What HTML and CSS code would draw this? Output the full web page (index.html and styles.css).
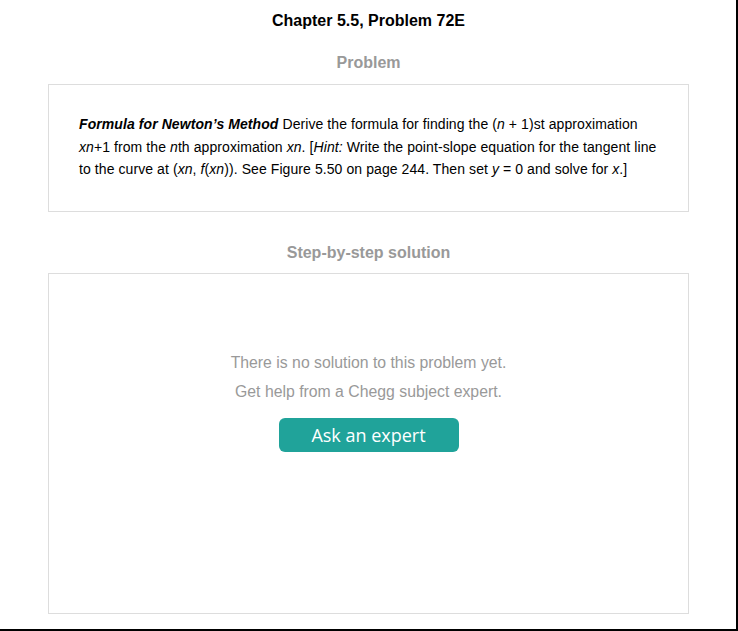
FILE: index.html
```html
<!DOCTYPE html>
<html>
<head>
<meta charset="utf-8">
<link rel="stylesheet" href="styles.css">
</head>
<body>
<div class="page">
  <h1 class="title">Chapter 5.5, Problem 72E</h1>
  <h2 class="section-title">Problem</h2>
  <div class="card problem">
    <p class="problem-text"><b><i>Formula for Newton’s Method</i></b> Derive the formula for finding the (<i>n</i> + 1)st approximation <i>xn</i>+1 from the <i>n</i>th approximation <i>xn</i>. [<i>Hint:</i> Write the point-slope equation for the tangent line to the curve at (<i>xn</i>, <i>f</i>(<i>xn</i>)). See Figure 5.50 on page 244. Then set <i>y</i> = 0 and solve for <i>x</i>.]</p>
  </div>
  <h2 class="section-title solution-title">Step-by-step solution</h2>
  <div class="card solution">
    <p class="msg">There is no solution to this problem yet.</p>
    <p class="msg">Get help from a Chegg subject expert.</p>
    <button class="ask">Ask an expert</button>
  </div>
</div>
</body>
</html>
```
FILE: styles.css
```css
html, body {
  margin: 0;
  padding: 0;
  background: #fff;
}
.page {
  box-sizing: border-box;
  width: 738px;
  height: 631px;
  border-right: 2px solid #000;
  border-bottom: 2px solid #000;
  padding: 10px 47px 0 48px;
  font-family: "Liberation Sans", Arial, sans-serif;
  overflow: hidden;
}
.title {
  margin: 0;
  font-size: 16px;
  font-weight: bold;
  line-height: 22px;
  text-align: center;
  color: #000;
}
.section-title {
  margin: 20px 0 0;
  font-size: 16px;
  font-weight: bold;
  line-height: 22px;
  text-align: center;
  color: #999;
}
.card {
  border: 1px solid #ddd;
  margin-top: 10px;
}
.problem {
  height: 128px;
  box-sizing: border-box;
  padding: 28px 26px 0 30px;
}
.problem-text {
  margin: 0;
  font-size: 14px;
  line-height: 22.5px;
  letter-spacing: 0.08px;
  color: #000;
}
.solution-title {
  margin-top: 30px;
}
.solution {
  margin-top: 9px;
  height: 341px;
  box-sizing: border-box;
  padding-top: 74px;
  display: flex;
  flex-direction: column;
  align-items: center;
}
.msg {
  margin: 0;
  font-size: 15.8px;
  line-height: 29px;
  color: #999;
}
.ask {
  margin-top: 12px;
  width: 180px;
  height: 34px;
  border: none;
  border-radius: 6px;
  background: #20a39a;
  color: #fff;
  font-family: "Open Sans", sans-serif;
  font-size: 18px;
  padding: 0;
}
```
